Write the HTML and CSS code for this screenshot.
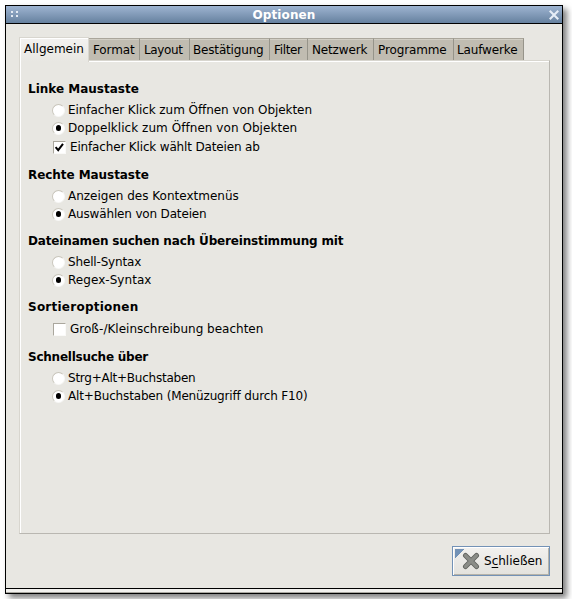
FILE: index.html
```html
<!DOCTYPE html>
<html lang="de">
<head>
<meta charset="utf-8">
<title>Optionen</title>
<link rel="stylesheet" href="styles.css">
</head>
<body>
<main class="window">
  <header class="titlebar">
    <svg class="grip" width="9" height="7" viewBox="0 0 9 7" shape-rendering="crispEdges"><path fill="#e3eaf3" d="M1 0h2v2H1zM6 0h2v2H6zM1 4h2v2H1zM6 4h2v2H6z"/></svg>
    <h1>Optionen</h1>
    <svg class="close" width="10" height="10" viewBox="0 0 10 10"><path d="M1.5 1.5l7 7M8.5 1.5L1.5 8.5" stroke="#e6edf6" stroke-width="2.1" stroke-linecap="square"/></svg>
  </header>
  <div class="content">
    <nav class="tabs">
      <span class="tab active">Allgemein</span>
      <span class="tab t-format">Format</span>
      <span class="tab t-layout">Layout</span>
      <span class="tab t-confirm">Bestätigung</span>
      <span class="tab t-filter">Filter</span>
      <span class="tab t-network">Netzwerk</span>
      <span class="tab t-programs">Programme</span>
      <span class="tab t-drives">Laufwerke</span>
    </nav>
    <div class="panel">
      <section>
        <h2>Linke Maustaste</h2>
        <div class="row ls-s"><i class="radio"></i>Einfacher Klick zum Öffnen von Objekten</div>
        <div class="row ls-l"><i class="radio on"></i>Doppelklick zum Öffnen von Objekten</div>
        <div class="row check ls-xs"><i class="box"><svg width="11" height="11" viewBox="0 0 11 11"><path d="M1.6 5.2L4.2 8.2L9 1.8" fill="none" stroke="#000" stroke-width="2"/></svg></i>Einfacher Klick wählt Dateien ab</div>
      </section>
      <section>
        <h2 class="ls-s">Rechte Maustaste</h2>
        <div class="row"><i class="radio"></i>Anzeigen des Kontextmenüs</div>
        <div class="row ls-xs"><i class="radio on"></i>Auswählen von Dateien</div>
      </section>
      <section>
        <h2 class="ls-xs">Dateinamen suchen nach Übereinstimmung mit</h2>
        <div class="row ls-xs"><i class="radio"></i>Shell-Syntax</div>
        <div class="row ls-l"><i class="radio on"></i>Regex-Syntax</div>
      </section>
      <section>
        <h2 class="ls-xl">Sortieroptionen</h2>
        <div class="row check"><i class="box"></i>Groß-/Kleinschreibung beachten</div>
      </section>
      <section>
        <h2 class="ls-xxs">Schnellsuche über</h2>
        <div class="row ls-xxs"><i class="radio"></i>Strg+Alt+Buchstaben</div>
        <div class="row ls-xs"><i class="radio on"></i>Alt+Buchstaben (Menüzugriff durch F10)</div>
      </section>
    </div>
    <div class="actions">
      <div class="button">
        <svg class="cross" width="18" height="18" viewBox="0 0 18 18"><path d="M3.5 3.5L14.5 14.5M14.5 3.5L3.5 14.5" stroke="#60625e" stroke-width="5" stroke-linecap="round"/><path d="M3.5 3.5L14.5 14.5M14.5 3.5L3.5 14.5" stroke="#8b8d88" stroke-width="3.2" stroke-linecap="round"/></svg>
        <span>S<u>c</u>hließen</span>
      </div>
    </div>
  </div>
  <footer class="handle"></footer>
</main>
</body>
</html>
```

FILE: styles.css
```css
* { box-sizing: border-box; }
body {
  margin: 0;
  padding: 5px;
  background: #fff;
  color: #000;
  font: 12px/18px "DejaVu Sans", sans-serif;
  overflow: hidden;
}
.window {
  width: 558px;
  height: 589px;
  display: flex;
  flex-direction: column;
  border: 1px solid #000;
  background: #e8e7e2;
  box-shadow: 4px 4px 6px rgba(0, 0, 0, .5);
}
.titlebar {
  height: 18px;
  flex: none;
  display: flex;
  align-items: center;
  padding: 0 3px 0 4px;
  border-bottom: 1px solid #000;
  background: linear-gradient(#9eb4d1, #66819f);
}
.titlebar h1 {
  flex: 1;
  margin: 0;
  color: #fff;
  text-align: center;
  font: bold 12px/16px "DejaVu Sans", sans-serif;
  letter-spacing: .1px;
}
.close { margin-top: 1px; }
.content {
  flex: 1;
  display: flex;
  flex-direction: column;
  padding: 13px 12px 12px 13px;
}
.tabs { display: flex; align-items: flex-end; height: 23px; flex: none; }
.tab {
  height: 22px;
  padding: 1px 0 0 4px;
  line-height: 20px;
  white-space: nowrap;
  background: #c0bcb1;
  border-top: 1px solid #aaa69b;
  border-right: 1px solid #96948a;
  box-shadow: inset 0 1px #d1cec4;
}
.tab.active {
  position: relative;
  width: 70px;
  height: 25px;
  margin-bottom: -2px;
  padding-top: 0;
  line-height: 22px;
  background: linear-gradient(#f3f2f0, #e8e7e2);
  border: solid #d8d6cf;
  border-width: 1px 1px 0;
  box-shadow: inset 1px 1px #fff;
}
.t-format { width: 51px; letter-spacing: -.1px; }
.t-layout { width: 50px; letter-spacing: -.35px; }
.t-confirm { width: 80px; padding-left: 3px; letter-spacing: -.17px; }
.t-filter { width: 38px; letter-spacing: -.35px; }
.t-network { width: 66px; letter-spacing: -.15px; }
.t-programs { width: 80px; letter-spacing: -.12px; }
.t-drives { width: 70px; padding-left: 3px; letter-spacing: -.14px; }
.ls-xxs { letter-spacing: -.24px; }
.ls-xs { letter-spacing: -.16px; }
.ls-s { letter-spacing: -.06px; }
.ls-l { letter-spacing: .05px; }
.ls-xl { letter-spacing: .24px; }
.panel {
  width: 531px;
  height: 474px;
  flex: none;
  padding: 19px 0 0 8px;
  border: 1px solid #b9b7b1;
  border-top-color: #d8d6cf;
  border-left-color: #d8d6cf;
  box-shadow: inset 1px 1px #fff;
}
section { margin-bottom: 9px; }
h2 {
  margin: 0 0 3px;
  font: bold 12px/18px "DejaVu Sans", sans-serif;
}
.row { height: 18px; display: flex; align-items: center; gap: 3px; padding-left: 24px; white-space: nowrap; }
.check { height: 20px; gap: 4px; padding-left: 25px; }
.radio {
  width: 13px;
  height: 13px;
  display: grid;
  place-items: center;
  border: 1px solid;
  border-color: #c8c5bb #f7f7f5 #f7f7f5 #c8c5bb;
  border-radius: 50%;
  background: #fff;
}
.radio.on::after { content: ""; width: 5.6px; height: 5.6px; border-radius: 50%; background: #000; }
.box {
  width: 13px;
  height: 13px;
  border: 1px solid;
  border-color: #aaa79d #fafaf8 #fafaf8 #aaa79d;
  background: #fff;
}
.box svg { display: block; }
.actions { display: flex; justify-content: flex-end; margin-top: 12px; }
.button {
  width: 98px;
  height: 30px;
  display: flex;
  align-items: center;
  gap: 4px;
  padding-left: 9px;
  border: 1px solid #7392b6;
  background: linear-gradient(135deg, #7392b6 6.5px, transparent 7px) 2px 2px no-repeat, linear-gradient(#f2f1ef, #e3e2dd);
  box-shadow: inset 1px 1px #fff, inset -1px -1px #b6b3a9;
}
.button u { text-underline-offset: 2px; }
.handle {
  height: 5px;
  flex: none;
  border-top: 1px solid #000;
  border-bottom: 1px solid #aaa8a1;
  background: #f2f1ee;
}
```
